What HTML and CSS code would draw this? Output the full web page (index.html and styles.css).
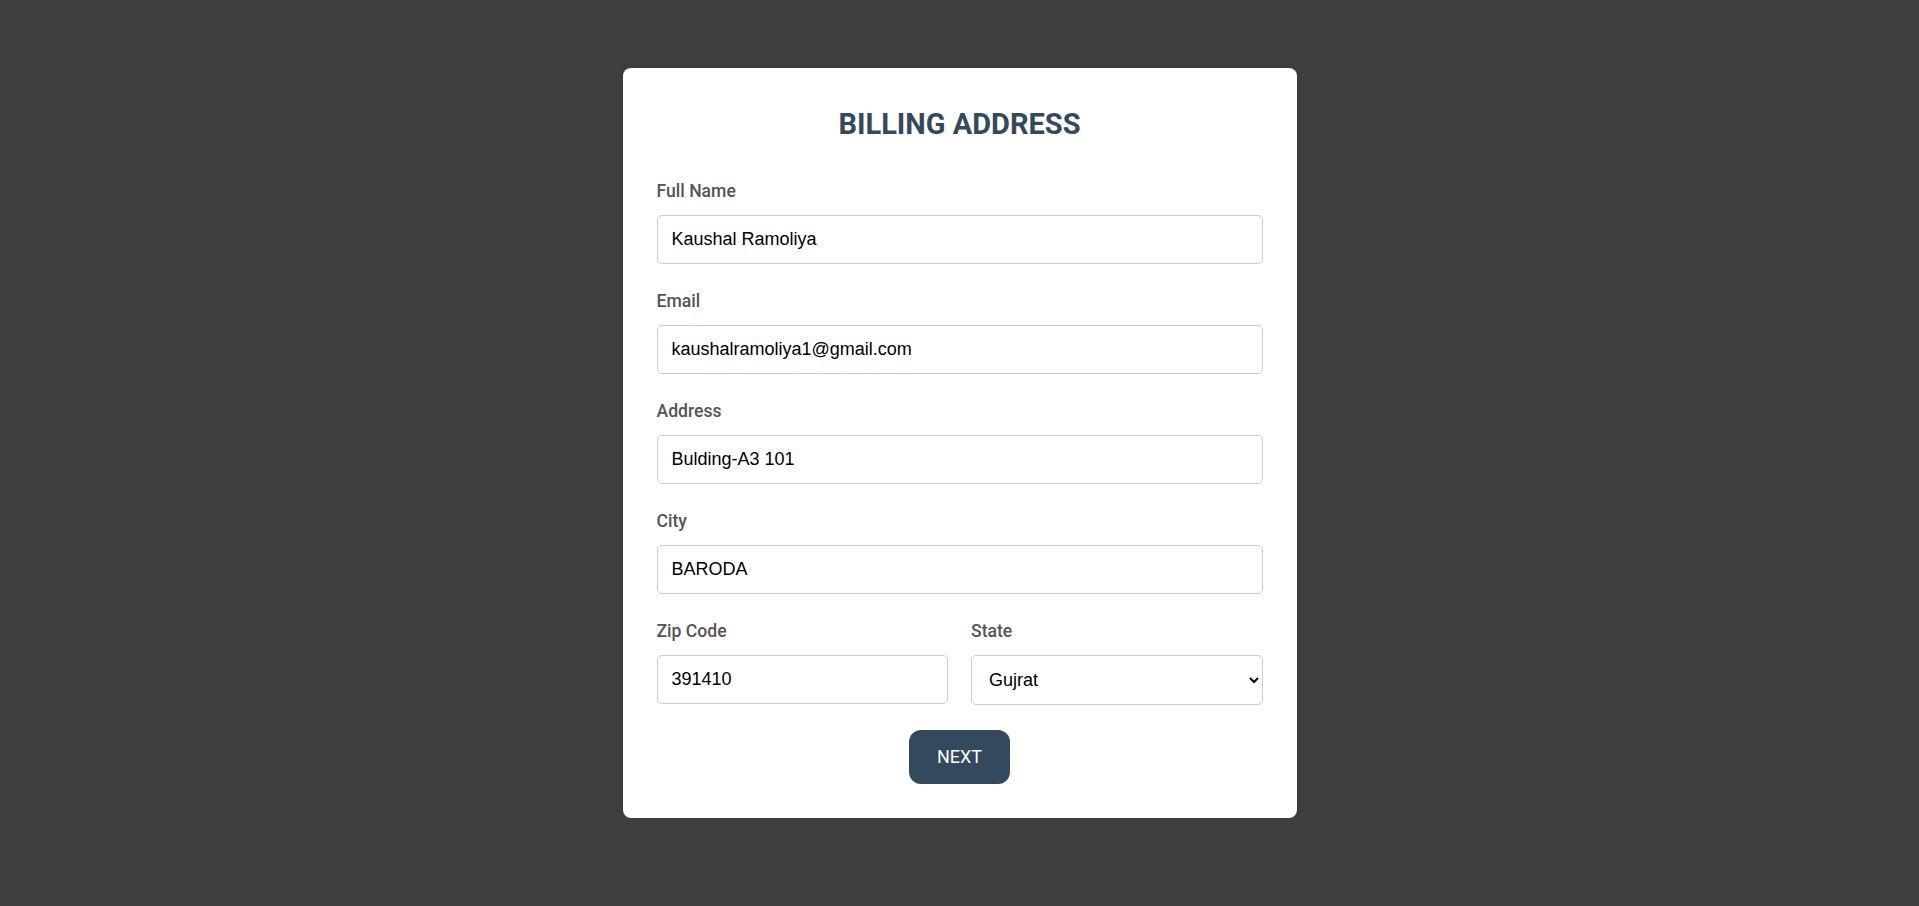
FILE: index.html
```html
<!DOCTYPE html>
<html lang="en">
<head>
<meta charset="utf-8">
<title>Billing Address</title>
<link rel="stylesheet" href="styles.css">
</head>
<body>
<div class="page">
  <form class="card">
    <h2 class="title">BILLING ADDRESS</h2>
    <div class="field">
      <label class="label" for="name">Full Name</label>
      <input class="input" id="name" type="text" value="Kaushal Ramoliya">
    </div>
    <div class="field">
      <label class="label" for="email">Email</label>
      <input class="input" id="email" type="email" value="kaushalramoliya1@gmail.com">
    </div>
    <div class="field">
      <label class="label" for="address">Address</label>
      <input class="input" id="address" type="text" value="Bulding-A3 101">
    </div>
    <div class="field">
      <label class="label" for="city">City</label>
      <input class="input" id="city" type="text" value="BARODA">
    </div>
    <div class="row">
      <div class="field field-last">
        <label class="label" for="zip">Zip Code</label>
        <input class="input" id="zip" type="text" value="391410">
      </div>
      <div class="field field-last">
        <label class="label" for="state">State</label>
        <select class="select" id="state">
          <option selected>Gujrat</option>
          <option>Maharashtra</option>
          <option>Rajasthan</option>
        </select>
      </div>
    </div>
    <button class="btn" type="button">NEXT</button>
  </form>
</div>
</body>
</html>
```

FILE: styles.css
```css
* {
  box-sizing: border-box;
}

html, body {
  margin: 0;
  padding: 0;
  background: #3f3f3f;
}

body {
  font-family: Roboto, "Liberation Sans", sans-serif;
}

.page {
  padding-top: 68px;
}

.card {
  width: 674px;
  margin: 0 auto;
  background: #ffffff;
  border-radius: 8px;
  padding: 40px 34px 34px;
  box-shadow: 0 0 10px rgba(0, 0, 0, 0.1);
}

.title {
  margin: 0 0 40px;
  font-family: Roboto, sans-serif;
  font-weight: 700;
  font-size: 29px;
  line-height: 33px;
  color: #34495e;
  text-align: center;
}

.field {
  margin-bottom: 27px;
}

.field-last {
  margin-bottom: 0;
}

.label {
  display: block;
  margin-bottom: 14px;
  font-family: Roboto, sans-serif;
  font-weight: 500;
  font-size: 17.6px;
  line-height: 20px;
  color: #555555;
}

.input,
.select {
  display: block;
  width: 100%;
  height: 49px;
  padding: 0 14px;
  border: 1px solid #cccccc;
  border-radius: 5px;
  background: #ffffff;
  font-family: "Liberation Sans", Arial, sans-serif;
  font-size: 18px;
  color: #000000;
  outline: none;
}

.select {
  height: 50px;
  padding: 0 13px;
}

.row {
  display: grid;
  grid-template-columns: 1fr 1fr;
  column-gap: 23px;
}

.btn {
  display: block;
  margin: 25px auto 0;
  height: 54px;
  padding: 0 28px;
  border: none;
  border-radius: 12px;
  background: #34495e;
  color: #ffffff;
  font-family: Roboto, sans-serif;
  font-size: 18px;
  font-weight: 400;
  line-height: 22px;
  cursor: pointer;
}
```
